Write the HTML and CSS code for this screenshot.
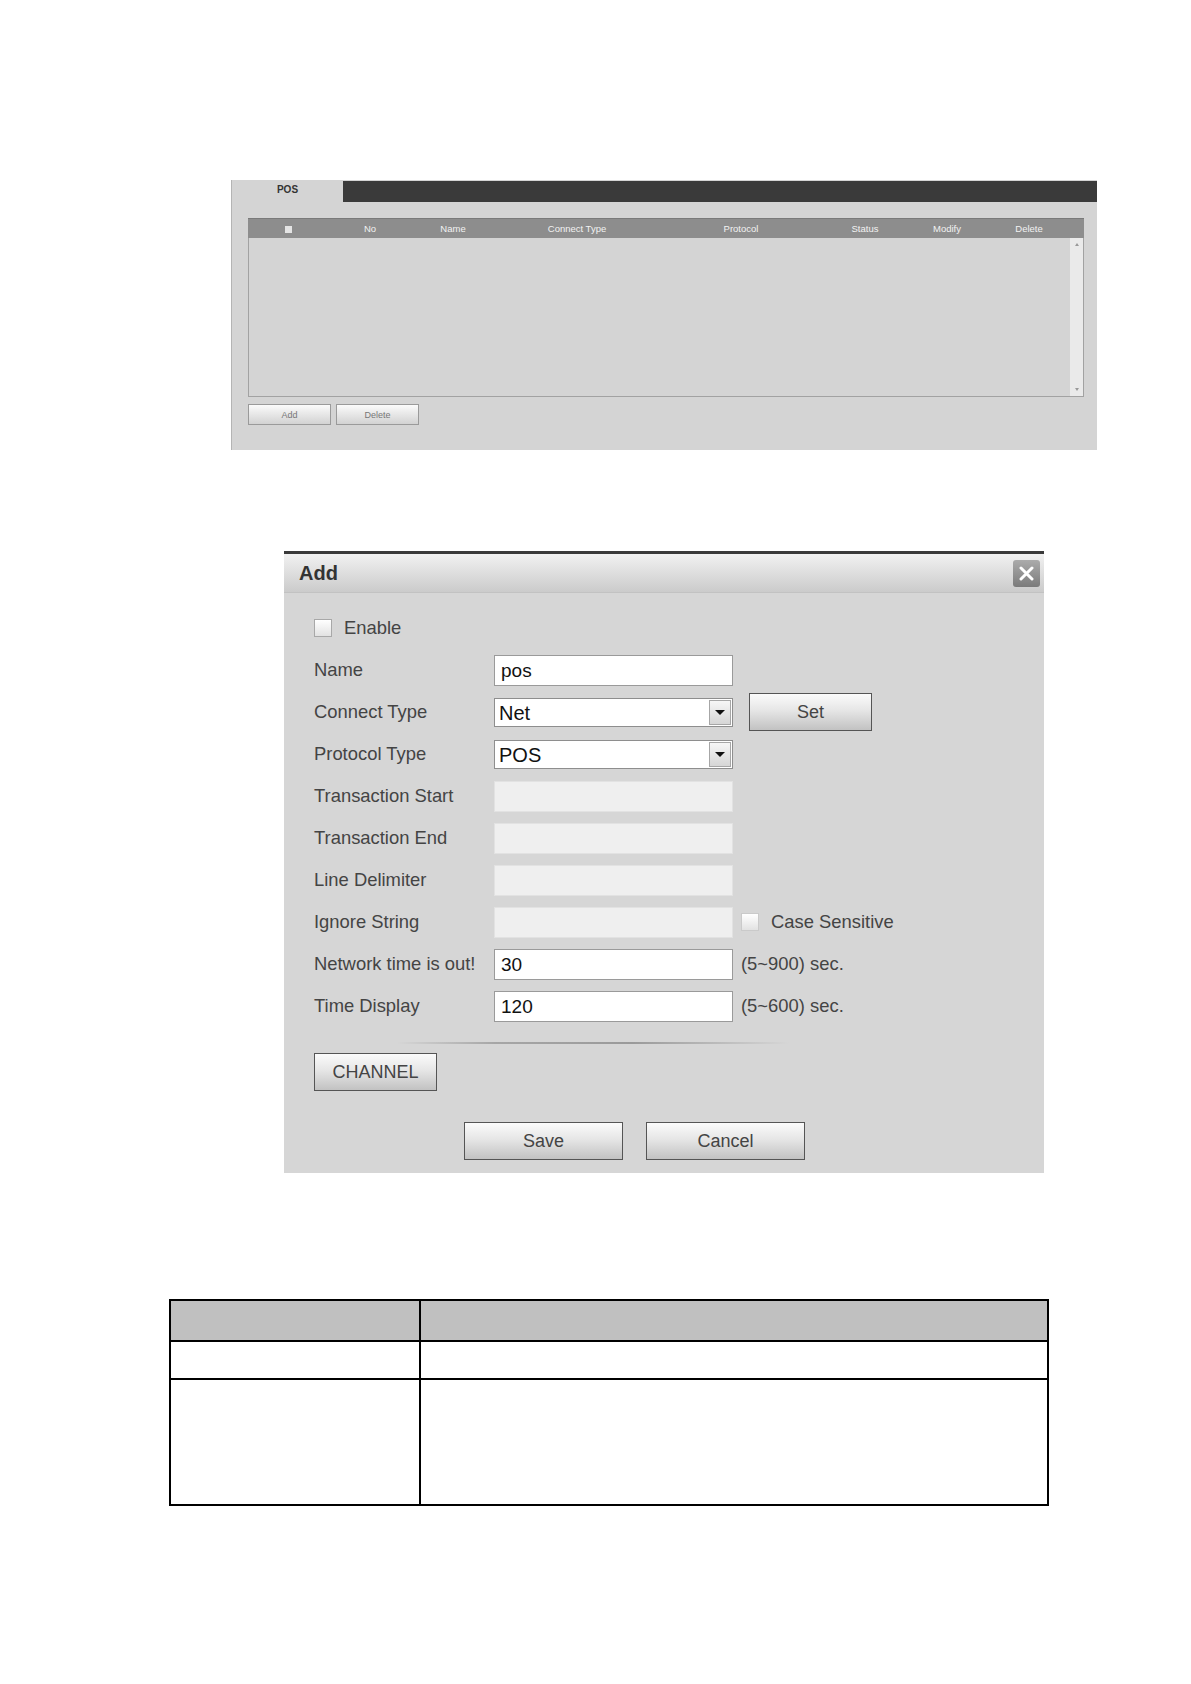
FILE: index.html
```html
<!DOCTYPE html>
<html>
<head>
    <title>POS</title>
    <link rel="stylesheet" href="styles.css">
</head>
<body>

<div class="pos-panel">
    <div class="tabbar">
        <div class="tab">POS</div>
    </div>
    <div class="pos-table">
        <div class="pos-head">
            <span><i class="mini-check"></i></span>
            <span>No</span>
            <span>Name</span>
            <span>Connect Type</span>
            <span>Protocol</span>
            <span>Status</span>
            <span>Modify</span>
            <span>Delete</span>
            <span></span>
        </div>
        <div class="pos-body">
            <div class="scroll">
                <i class="arr up"></i>
                <i class="arr down"></i>
            </div>
        </div>
    </div>
    <div class="pos-buttons">
        <button type="button" class="small-btn">Add</button>
        <button type="button" class="small-btn">Delete</button>
    </div>
</div>

<div class="dialog">
    <div class="dlg-title">
        <span>Add</span>
        <button type="button" class="close-btn">
            <svg width="15" height="15" viewBox="0 0 15 15"><path d="M2 2 L13 13 M13 2 L2 13" stroke="#fff" stroke-width="3" stroke-linecap="round"/></svg>
        </button>
    </div>
    <div class="dlg-body">
        <div class="row">
            <i class="box"></i><span class="check-text">Enable</span>
        </div>
        <div class="row">
            <span class="label">Name</span>
            <input type="text" class="field" value="pos">
        </div>
        <div class="row">
            <span class="label">Connect Type</span>
            <div class="select"><span class="sel-text">Net</span><span class="sel-arrow"><i></i></span></div>
            <button type="button" class="btn set-btn">Set</button>
        </div>
        <div class="row">
            <span class="label">Protocol Type</span>
            <div class="select"><span class="sel-text">POS</span><span class="sel-arrow"><i></i></span></div>
        </div>
        <div class="row">
            <span class="label">Transaction Start</span>
            <input type="text" class="field" disabled>
        </div>
        <div class="row">
            <span class="label">Transaction End</span>
            <input type="text" class="field" disabled>
        </div>
        <div class="row">
            <span class="label">Line Delimiter</span>
            <input type="text" class="field" disabled>
        </div>
        <div class="row">
            <span class="label">Ignore String</span>
            <input type="text" class="field" disabled>
            <i class="box box-sm"></i><span class="check-text">Case Sensitive</span>
        </div>
        <div class="row">
            <span class="label">Network time is out!</span>
            <input type="text" class="field" value="30">
            <span class="suffix">(5~900) sec.</span>
        </div>
        <div class="row">
            <span class="label">Time Display</span>
            <input type="text" class="field" value="120">
            <span class="suffix">(5~600) sec.</span>
        </div>

        <div class="sep"></div>

        <button type="button" class="btn channel-btn">CHANNEL</button>

        <div class="dlg-actions">
            <button type="button" class="btn wide-btn">Save</button>
            <button type="button" class="btn wide-btn">Cancel</button>
        </div>
    </div>
</div>

<table class="param-table">
    <tr class="head-row">
        <th></th>
        <th></th>
    </tr>
    <tr class="short-row">
        <td></td>
        <td></td>
    </tr>
    <tr class="tall-row">
        <td></td>
        <td></td>
    </tr>
</table>

</body>
</html>
```

FILE: styles.css
```css
body {
    margin: 0;
    background: #fff;
    font-family: "Liberation Sans", Arial, sans-serif;
}

/* POS list panel */
.pos-panel {
    margin: 180px 0 0 231px;
    width: 866px;
    height: 270px;
    box-sizing: border-box;
    background: #d4d4d4;
    border-left: 1px solid #b4b4b4;
    padding-top: 1px;
}

.tabbar {
    height: 21px;
    background: #3a3a3a;
    display: flex;
}

.tab {
    width: 111px;
    background: #d4d4d4;
    color: #333;
    font-size: 10px;
    font-weight: bold;
    text-align: center;
    line-height: 18px;
}

.pos-table {
    margin: 16px 0 0 16px;
    width: 836px;
}

.pos-head {
    display: grid;
    grid-template-columns: 80px 84px 82px 166px 162px 86px 78px 86px 1fr;
    align-items: center;
    height: 19px;
    background: #8d8d8d;
    border-top: 1px solid #7a7a7a;
    color: #f2f2f2;
    font-size: 9.5px;
    text-align: center;
}

.mini-check {
    display: inline-block;
    width: 7px;
    height: 7px;
    background: #e4e4e4;
    vertical-align: middle;
}

.pos-body {
    height: 158px;
    border: 1px solid #a2a2a2;
    border-top: none;
    display: flex;
    justify-content: flex-end;
}

.scroll {
    width: 13px;
    background: #eaeaea;
    display: flex;
    flex-direction: column;
    justify-content: space-between;
    align-items: center;
    padding: 5px 0;
}

.arr {
    width: 0;
    height: 0;
    border-left: 2px solid transparent;
    border-right: 2px solid transparent;
}

.arr.up {
    border-bottom: 3px solid #999;
}

.arr.down {
    border-top: 3px solid #999;
}

.pos-buttons {
    margin: 7px 0 0 16px;
    display: flex;
    gap: 5px;
}

.small-btn {
    width: 83px;
    height: 21px;
    padding: 0;
    border: 1px solid #9a9a9a;
    background: linear-gradient(#fbfbfb, #d2d2d2);
    color: #777;
    font-family: "Liberation Sans", Arial, sans-serif;
    font-size: 9px;
}

/* Add dialog */
.dialog {
    margin: 101px 0 0 284px;
    width: 760px;
    height: 622px;
    box-sizing: border-box;
    background: #d6d6d6;
}

.dlg-title {
    height: 42px;
    box-sizing: border-box;
    border-top: 3px solid #3a3a3a;
    border-bottom: 1px solid #c2c2c2;
    background: linear-gradient(#f1f1f1, #cbcbcb);
    display: flex;
    align-items: center;
    justify-content: space-between;
    padding: 0 4px 0 15px;
    color: #333;
    font-size: 20px;
    font-weight: bold;
}

.close-btn {
    width: 27px;
    height: 27px;
    padding: 0;
    border: none;
    border-radius: 3px;
    background: linear-gradient(#ababab, #7b7b7b);
    display: flex;
    align-items: center;
    justify-content: center;
}

.dlg-body {
    padding: 14px 0 0 30px;
}

.row {
    display: flex;
    align-items: center;
    height: 42px;
}

.label {
    width: 180px;
    font-size: 18.4px;
    color: #444;
}

.box {
    width: 16px;
    height: 16px;
    border: 1px solid #a8a8a8;
    background: linear-gradient(#ffffff, #e2e2e2);
}

.box-sm {
    margin-left: 8px;
    border-color: #cacaca;
}

.check-text {
    margin-left: 12px;
    font-size: 18.4px;
    color: #444;
}

.field {
    width: 239px;
    height: 31px;
    box-sizing: border-box;
    margin: 0;
    border: 1px solid #9a9a9a;
    background: #fff;
    padding: 2px 6px 0;
    color: #111;
    font-family: "Liberation Sans", Arial, sans-serif;
    font-size: 19px;
}

.field:disabled {
    background: #efefef;
    border-color: #e2e2e2;
}

.select {
    width: 239px;
    height: 29px;
    box-sizing: border-box;
    border: 1px solid #8e8e8e;
    background: #fff;
    display: flex;
    align-items: center;
    justify-content: space-between;
}

.sel-text {
    padding: 2px 0 0 4px;
    color: #111;
    font-size: 20px;
}

.sel-arrow {
    width: 22px;
    height: 25px;
    margin-right: 1px;
    box-sizing: border-box;
    border: 1px solid #a6a6a6;
    background: linear-gradient(#f6f6f6, #d6d6d6);
    display: flex;
    align-items: center;
    justify-content: center;
}

.sel-arrow i {
    width: 0;
    height: 0;
    border-left: 5px solid transparent;
    border-right: 5px solid transparent;
    border-top: 5px solid #111;
}

.suffix {
    margin-left: 8px;
    font-size: 18.4px;
    color: #444;
}

.btn {
    height: 38px;
    padding: 0;
    border: 1px solid #555;
    background: linear-gradient(#fbfbfb, #e6e6e6 45%, #c2c2c2);
    color: #444;
    font-family: "Liberation Sans", Arial, sans-serif;
    font-size: 18px;
}

.set-btn {
    width: 123px;
    margin-left: 16px;
}

.sep {
    margin: 15px 0 0 83px;
    width: 392px;
    height: 2px;
    background: linear-gradient(to right, rgba(150,150,150,0), #a6a6a6 25%, #9a9a9a 60%, rgba(150,150,150,0));
}

.channel-btn {
    display: block;
    width: 123px;
    margin-top: 9px;
}

.dlg-actions {
    margin: 31px 0 0 150px;
    display: flex;
    gap: 23px;
}

.wide-btn {
    width: 159px;
}

/* parameter table */
.param-table {
    margin: 126px 0 0 169px;
    width: 880px;
    border-collapse: collapse;
}

.param-table th,
.param-table td {
    border: 2px solid #000;
    padding: 0;
}

.param-table th:first-child,
.param-table td:first-child {
    width: 248px;
}

.head-row th {
    height: 39px;
    background: #c0c0c0;
}

.short-row td {
    height: 36px;
}

.tall-row td {
    height: 124px;
}
```
